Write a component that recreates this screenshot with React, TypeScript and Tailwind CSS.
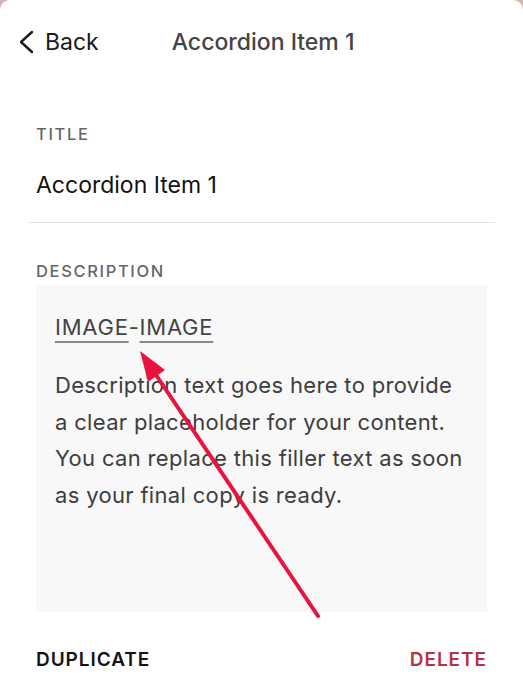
const FONT = "font-['Inter','Liberation_Sans',sans-serif]";

const DESCRIPTION_LINES = [
  "Description text goes here to provide",
  "a clear placeholder for your content.",
  "You can replace this filler text as soon",
  "as your final copy is ready.",
];

function BackChevron() {
  return (
    <svg width="16" height="24" viewBox="0 0 16 24" fill="none">
      <polyline points="14,2 3,12 14,22" stroke="#1a1a1a" strokeWidth="2.4" strokeLinecap="round" strokeLinejoin="round" />
    </svg>
  );
}

function EditorArrow() {
  // annotation arrow pointing at the link gap
  return (
    <svg className="pointer-events-none absolute inset-0" width="523" height="700" viewBox="0 0 523 700">
      <line x1="318" y1="616" x2="152" y2="369" stroke="#e8133f" strokeWidth="4" strokeLinecap="round" />
      <polygon points="140,351 165,370 148,382" fill="#e8133f" />
    </svg>
  );
}

export default function App() {
  return (
    <div className="h-[700px] w-[523px] bg-[#d4b5b5]">
      <div className={`relative h-[700px] w-[523px] overflow-hidden rounded-t-[10px] bg-white ${FONT}`}>
        <header className="flex h-[84px] items-center pl-[18px]">
          <button className="flex items-center gap-[11px] text-[23px] leading-[30px] text-[#1a1a1a]">
            <BackChevron />
            <span>Back</span>
          </button>
          <h1 className="ml-[73px] text-[23px] font-medium leading-[30px] text-[#444]">Accordion Item 1</h1>
        </header>

        <section className="px-9 pt-[40px]">
          <p className="text-[16.5px] font-medium leading-[20px] tracking-[0.1em] text-[#666]">TITLE</p>
          <p className="mt-[26px] text-[23px] leading-[30px] text-[#111]">Accordion Item 1</p>
        </section>
        <div className="mx-7 mt-[22px] h-px bg-[#e4e4e4]" />

        <section className="px-9 pt-[38px]">
          <p className="text-[16.5px] font-medium leading-[20px] tracking-[0.1em] text-[#666]">DESCRIPTION</p>
          <div className="mt-[4px] h-[327px] bg-[#f8f8f8] pl-[19px] pr-[4px] pt-[27px]">
            <p className="text-[22px] leading-[30px] tracking-[0.035em] text-[#444]">
              <span className="underline decoration-[#888] decoration-2 underline-offset-[6px]">IMAGE</span>-<span className="underline decoration-[#888] decoration-2 underline-offset-[6px]">IMAGE</span>
            </p>
            <p className="mt-[25px] whitespace-nowrap text-[22px] leading-[36.5px] tracking-[0.015em] text-[#3d3d3d]">
              {DESCRIPTION_LINES.map((line, i) => (
                <span key={i} className="block">{line}</span>
              ))}
            </p>
          </div>
        </section>

        <footer className="flex items-center justify-between px-9 pt-[36px]">
          <button className="text-[19px] font-semibold leading-[24px] tracking-[0.05em] text-[#141414]">DUPLICATE</button>
          <button className="text-[19px] font-semibold leading-[24px] tracking-[0.05em] text-[#b8323f]">DELETE</button>
        </footer>

        <EditorArrow />
      </div>
    </div>
  );
}
